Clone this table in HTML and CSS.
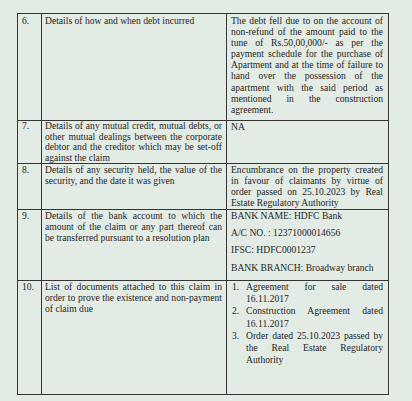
FILE: index.html
```html
<!DOCTYPE html>
<html lang="en">
<head>
<meta charset="utf-8">
<title>Claim details</title>
<link rel="stylesheet" href="styles.css">
</head>
<body>
<table class="claim">
  <colgroup>
    <col class="c-num">
    <col class="c-label">
    <col class="c-value">
  </colgroup>
  <tr class="r6">
    <td class="num">6.</td>
    <td class="label">Details of how and when debt incurred</td>
    <td class="value">The debt fell due to on the account of non-refund of the amount paid to the tune of Rs.50,00,000/- as per the payment schedule for the purchase of Apartment and at the time of failure to hand over the possession of the apartment with the said period as mentioned in the construction agreement.</td>
  </tr>
  <tr class="r7">
    <td class="num">7.</td>
    <td class="label">Details of any mutual credit, mutual debts, or other mutual dealings between the corporate debtor and the creditor which may be set-off against the claim</td>
    <td class="value">NA</td>
  </tr>
  <tr class="r8">
    <td class="num">8.</td>
    <td class="label">Details of any security held, the value of the security, and the date it was given</td>
    <td class="value">Encumbrance on the property created in favour of claimants by virtue of order passed on 25.10.2023 by Real Estate Regulatory Authority</td>
  </tr>
  <tr class="r9">
    <td class="num">9.</td>
    <td class="label">Details of the bank account to which the amount of the claim or any part thereof can be transferred pursuant to a resolution plan</td>
    <td class="value">
      <p class="bank">BANK NAME: HDFC Bank</p>
      <p class="bank">A/C NO. : 12371000014656</p>
      <p class="bank">IFSC: HDFC0001237</p>
      <p class="bank">BANK BRANCH: Broadway branch</p>
    </td>
  </tr>
  <tr class="r10">
    <td class="num">10.</td>
    <td class="label">List of documents attached to this claim in order to prove the existence and non-payment of claim due</td>
    <td class="value">
      <ol class="docs">
        <li><span class="n">1.</span><span class="t">Agreement for sale dated 16.11.2017</span></li>
        <li><span class="n">2.</span><span class="t">Construction Agreement dated 16.11.2017</span></li>
        <li><span class="n">3.</span><span class="t">Order dated 25.10.2023 passed by the Real Estate Regulatory Authority</span></li>
      </ol>
    </td>
  </tr>
</table>
</body>
</html>
```

FILE: styles.css
```css
html, body {
  margin: 0;
  padding: 0;
  background: #e3ebe5;
}

body {
  padding: 13px 0 0 17px;
  font-family: "Liberation Serif", "Times New Roman", serif;
  font-size: 9.6px;
  line-height: 11px;
  color: #262626;
}

.claim {
  border-collapse: collapse;
  table-layout: fixed;
  width: 371px;
}

.c-num { width: 24px; }
.c-label { width: 185px; }
.c-value { width: 162px; }

.claim td {
  border: 1px solid #363636;
  vertical-align: top;
  padding: 1px 4px 0 4px;
  text-align: justify;
}

.claim td.num {
  padding-left: 4px;
  text-align: left;
}

.claim td.label {
  padding-left: 3px;
  padding-right: 4px;
}

.claim td.value {
  padding-left: 4px;
  padding-right: 5px;
}

.r6 { height: 107px; }
.r6 .value { line-height: 11.1px; }

.r7 { height: 43px; }
.r7 td { padding-top: 0; line-height: 10.5px; }
.r7 td.value { padding-top: 1px; }

.r8 { height: 45px; }
.r8 td { padding-top: 1px; line-height: 10.9px; }

.r9 { height: 71px; }
.r9 td { padding-top: 0; }

.r10 { height: 114px; }
.r10 td { padding-top: 0; }

.bank {
  margin: 0 0 6.3px 0;
  line-height: 11px;
  text-align: left;
}

.docs {
  margin: 0;
  padding: 0;
  list-style: none;
  line-height: 12.3px;
}

.docs li {
  display: flex;
}

.docs .n {
  flex: 0 0 14px;
  padding-left: 1px;
}

.docs .t {
  flex: 1;
  text-align: justify;
}
```
